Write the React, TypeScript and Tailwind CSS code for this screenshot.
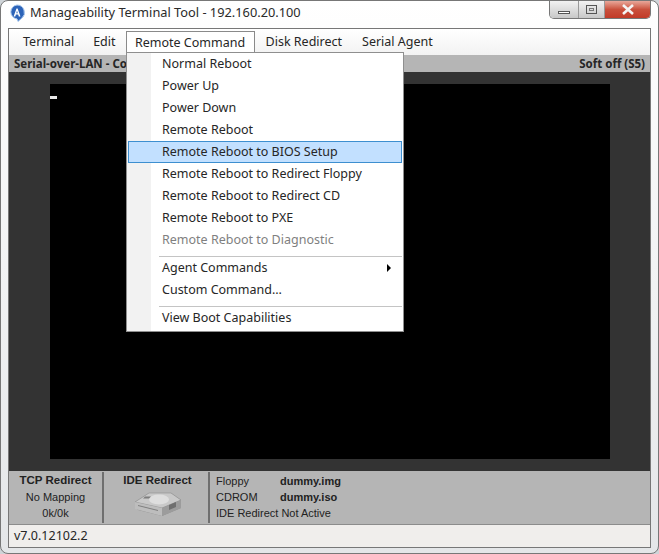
// App.tsx
// Manageability Terminal Tool window with the Remote Command menu open

const menuGroups = [
  [
    { name: 'Normal Reboot' },
    { name: 'Power Up' },
    { name: 'Power Down' },
    { name: 'Remote Reboot' },
    { name: 'Remote Reboot to BIOS Setup', active: true },
    { name: 'Remote Reboot to Redirect Floppy' },
    { name: 'Remote Reboot to Redirect CD' },
    { name: 'Remote Reboot to PXE' },
    { name: 'Remote Reboot to Diagnostic', disabled: true },
  ],
  [{ name: 'Agent Commands', submenu: true }, { name: 'Custom Command...' }],
  [{ name: 'View Boot Capabilities' }],
]

function AppIcon() {
  return (
    <svg width="18" height="18" viewBox="0 0 18 18" className="shrink-0">
      <path d="M9 1a7.5 7.5 0 0 1 4.8 13.2L10 17.5l-1-2.6A7 7 0 0 1 9 1z" fill="#2c63b8" stroke="#a9c8ee" strokeWidth="1" />
      <path d="M5.6 12.5 8.5 4.4h1.1l2.9 8.1h-1.7l-.6-1.9H7.9l-.6 1.9zM8.3 9.3h1.5L9 6.8z" fill="#fff" />
    </svg>
  )
}

function DiskIcon() {
  return (
    <svg width="48" height="26" viewBox="0 0 48 26">
      <path d="M1 11 15 2h22l10 7v8L28 25 4 19 1 16z" fill="#8d8d8d" />
      <path d="M1 11 15 2h22l10 7-19 8z" fill="#c9c9c9" stroke="#8f8f8f" strokeWidth="0.6" />
      <path d="M1 11l27 6v8L1 18z" fill="#bdbdbd" />
      <path d="M28 17l19-8v8l-19 8z" fill="#9c9c9c" />
      <ellipse cx="25" cy="8.5" rx="10" ry="5" fill="#dedede" />
      <path d="M35 14l7-3v5l-7 3z" fill="#6f6f6f" />
      <path d="M4 14.5l20 5" stroke="#7f7f7f" strokeWidth="1" />
      <path d="M11 5.5h6l-2 2H9z" fill="#7d7d7d" />
    </svg>
  )
}

function Divider() {
  return <div className="w-[2px] bg-[#6f6f6f] shrink-0" />
}

function RemoteMenu() {
  return (
    <div className="absolute left-[126px] top-[52px] w-[278px] h-[280px] bg-white border border-[#8f8f8f] px-[1px] z-10 text-[#262626]">
      <div className="absolute left-0 top-0 bottom-0 w-[24px] bg-[#f2f2f2]" />
      <div className="relative flex flex-col">
        {menuGroups.map((group, i) => (
          <div key={i} className={i > 0 ? 'border-t border-[#c4c4c4] mt-[5px] ml-[31px]' : ''}>
            {group.map((item) => (
              <div
                key={item.name}
                className={`h-[22px] flex items-center ${i > 0 ? 'pl-[2px]' : 'pl-[33px]'} pr-[10px] justify-between border ${
                  item.active ? 'bg-[#c2e0ff] border-[#3d8fd0]' : 'border-transparent'
                } ${item.disabled ? 'text-[#7f7f7f]' : ''}`}
              >
                <span>{item.name}</span>
                {item.submenu && <span className="w-0 h-0 border-y-[4px] border-y-transparent border-l-[4px] border-l-black" />}
              </div>
            ))}
          </div>
        ))}
      </div>
    </div>
  )
}

export default function App() {
  return (
    <div className="relative w-[659px] h-[554px] overflow-hidden bg-[#cfd4d8] font-['Noto_Sans',sans-serif] text-[12.5px] text-[#262626]">
      {/* glass frame */}
      <div className="h-[554px] rounded-[8px] border border-[#777] bg-gradient-to-b from-white to-[#e4e6e8] pl-[7px] pr-[7px] flex flex-col">
        {/* title bar */}
        <div className="relative h-[27px] shrink-0 flex items-center gap-[4px] text-[12.8px] text-[#2a2a2a] pb-[3px]">
          <AppIcon />
          <span>Manageability Terminal Tool - 192.160.20.100</span>
          <div className="absolute right-0 top-0 h-[18px] w-[102px] flex rounded-b-[5px] border border-t-0 border-[#777] overflow-hidden">
            <div className="w-[29px] bg-gradient-to-b from-[#f2f2f2] to-[#c8c8c8] border-r border-[#999] flex items-end justify-center pb-[4px]">
              <div className="w-[12px] h-[3px] border border-[#555] bg-white" />
            </div>
            <div className="w-[26px] bg-gradient-to-b from-[#f2f2f2] to-[#c8c8c8] border-r border-[#999] flex items-center justify-center">
              <div className="w-[11px] h-[9px] border border-[#555] flex items-center justify-center">
                <div className="w-[5px] h-[3px] border border-[#777]" />
              </div>
            </div>
            <div className="flex-1 bg-gradient-to-b from-[#e8a79a] via-[#c9503c] to-[#c23a28] flex items-center justify-center">
              <svg width="14" height="11" viewBox="0 0 14 11">
                <path d="M2 1l10 9M12 1 2 10" stroke="#f4f4f4" strokeWidth="2.6" />
              </svg>
            </div>
          </div>
        </div>

        {/* client area */}
        <div className="flex-1 mb-[5px] border border-[#777] bg-white flex flex-col min-h-0">
          {/* menu bar */}
          <div className="h-[26px] shrink-0 flex items-center bg-gradient-to-b from-white to-[#f2f2f2] pl-[6px]">
            <span className="px-[8px]">Terminal</span>
            <span className="ml-[2px] px-[9px]">Edit</span>
            <span className="h-[24px] w-[129px] ml-[1px] flex items-center justify-center border border-b-0 border-[#8a8a8a] bg-white mt-[2px]">Remote Command</span>
            <span className="ml-[1px] px-[10px]">Disk Redirect</span>
            <span className="px-[10px]">Serial Agent</span>
          </div>

          {/* connection header */}
          <div className="h-[17px] shrink-0 bg-[#b5b5b5] flex items-center justify-between px-[5px] text-[11.5px] font-bold">
            <span>Serial-over-LAN - Co</span>
            <span>Soft off (S5)</span>
          </div>

          {/* terminal */}
          <div className="flex-1 bg-[#333333] pl-[41px] pr-[40px] py-[12px] min-h-0">
            <div className="h-full bg-black pt-[12px]">
              <div className="w-[7px] h-[3px] bg-[#e8e8e8]" />
            </div>
          </div>

          {/* redirect panel */}
          <div className="h-[54px] shrink-0 bg-[#b5b5b5] flex pt-[1px] pb-[1px] font-['Liberation_Sans',sans-serif] text-[11px] border-b border-[#8c8c8c] text-[#222]">
            <div className="w-[93px] shrink-0 flex flex-col items-center leading-[16px]">
              <span className="font-bold text-[11.5px] mb-[1px]">TCP Redirect</span>
              <span>No Mapping</span>
              <span>0k/0k</span>
            </div>
            <Divider />
            <div className="w-[104px] shrink-0 flex flex-col items-center pl-[3px] leading-[16px]">
              <span className="font-bold text-[11.5px]">IDE Redirect</span>
              <div className="mt-[3px]">
                <DiskIcon />
              </div>
            </div>
            <Divider />
            <div className="pl-[6px] pt-[1px] grid grid-cols-[64px_auto] leading-[16px] h-fit">
              <span>Floppy</span>
              <span className="font-bold">dummy.img</span>
              <span>CDROM</span>
              <span className="font-bold">dummy.iso</span>
              <span className="col-span-2">IDE Redirect Not Active</span>
            </div>
          </div>

          {/* status bar */}
          <div className="h-[22px] shrink-0 bg-[#f0eeec] flex items-center px-[5px]">v7.0.12102.2</div>
        </div>
      </div>

      <RemoteMenu />
    </div>
  )
}
